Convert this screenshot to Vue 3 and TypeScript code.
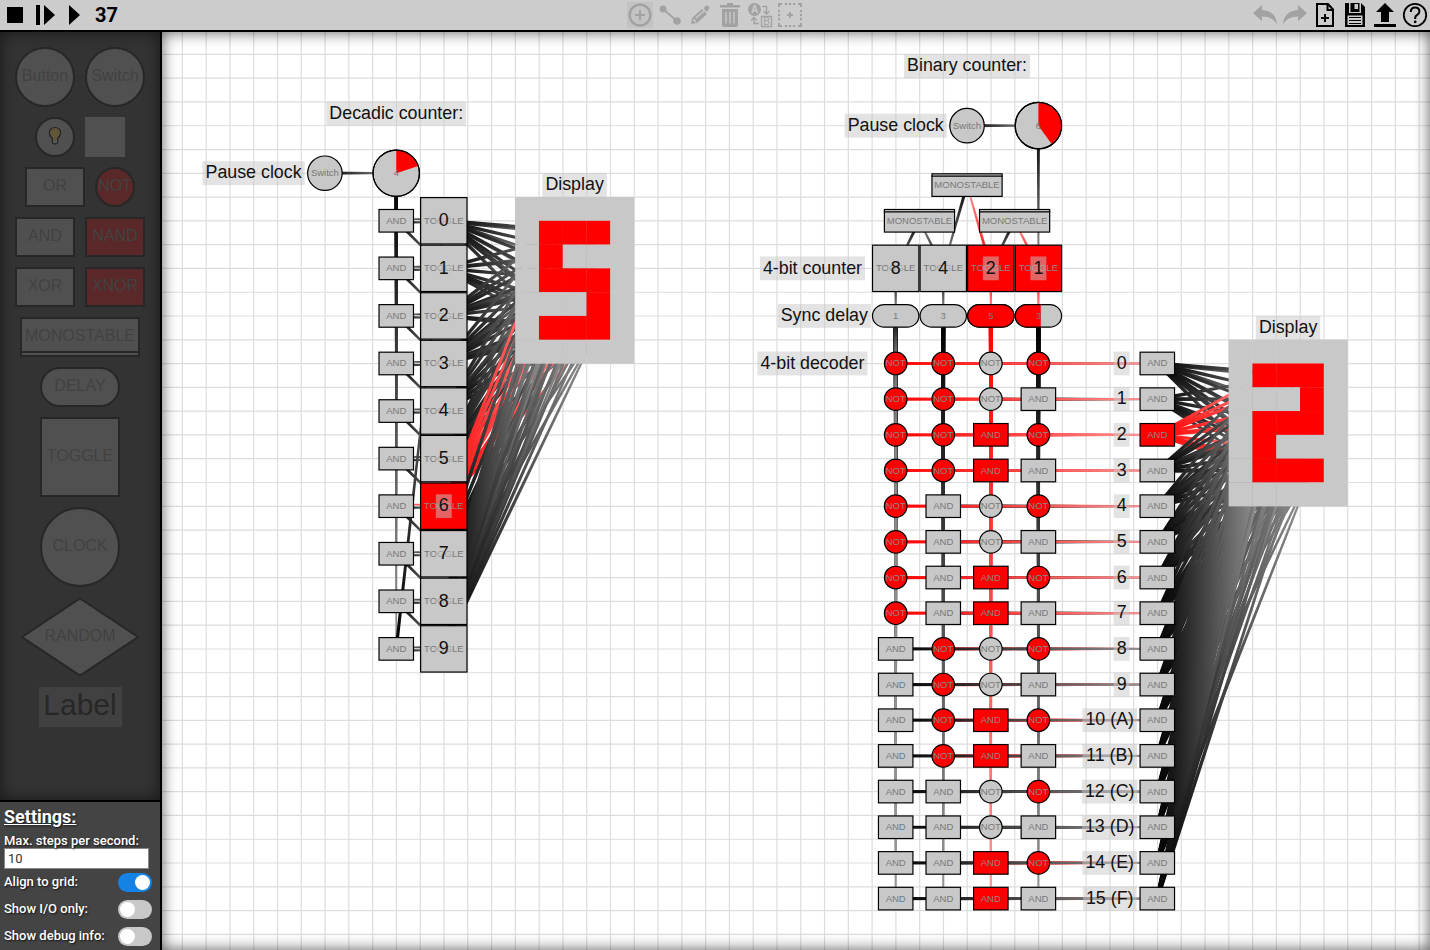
<script setup lang="ts">
import { ref } from 'vue'

type Point = [number, number]
interface Wire { a: Point; b: Point; on: boolean; shift: number; w: number }
interface Part { kind: string; x: number; y: number; w: number; h: number; text: string; on: boolean; fill?: number }
interface Label { x: number; y: number; text: string }

const STEP = 23.783
const gx = (k: number) => 182.2 + STEP * k
const gy = (k: number) => 54.3 + STEP * k

const steps = ref(37)
const maxSteps = ref('10')
const settings = ref([
  { name: 'Align to grid:', on: true },
  { name: 'Show I/O only:', on: false },
  { name: 'Show debug info:', on: false },
])

const palette = [
  [{ c: 'round big', t: 'Button' }, { c: 'round big', t: 'Switch' }],
  [{ c: 'round bulb', t: '' }, { c: 'pixel', t: '' }],
  [{ c: 'gate', t: 'OR' }, { c: 'round not neg', t: 'NOT' }],
  [{ c: 'gate', t: 'AND' }, { c: 'gate neg', t: 'NAND' }],
  [{ c: 'gate', t: 'XOR' }, { c: 'gate neg', t: 'XNOR' }],
  [{ c: 'mono', t: 'MONOSTABLE' }],
  [{ c: 'delay', t: 'DELAY' }],
  [{ c: 'toggle', t: 'TOGGLE' }],
  [{ c: 'round clock', t: 'CLOCK' }],
  [{ c: 'random', t: 'RANDOM' }],
  [{ c: 'label', t: 'Label' }],
]

const font = [
  '111101101101111', '010110010010111', '111001111100111', '111001111001111',
  '101101111001001', '111100111001111', '111100111101111', '111001001001001',
  '111101111101111', '111101111001111', '111101111101101', '110101110101110',
  '111100100100111', '110101101101110', '111100111100111', '111100111100100',
]

const wires: Wire[] = []
const parts: Part[] = []
const labels: Label[] = []
const pixels: { x: number; y: number; on: boolean }[] = []

function wire(x1: number, y1: number, x2: number, y2: number, on = false, shift = 0, w = 1) {
  wires.push({ a: [gx(x1), gy(y1)], b: [gx(x2), gy(y2)], on, shift, w })
}
function part(kind: string, x: number, y: number, w: number, h: number, text: string, on = false, fill?: number) {
  parts.push({ kind, x: gx(x), y: gy(y), w: w * STEP, h: h * STEP, text, on, fill })
}
function label(x: number, y: number, text: string) {
  labels.push({ x: gx(x), y: gy(y), text })
}
function display(left: number, top: number, digit: number) {
  for (let r = 0; r < 7; r++) {
    for (let c = 0; c < 5; c++) {
      const inside = r > 0 && r < 6 && c > 0 && c < 4
      pixels.push({ x: gx(left + c), y: gy(top + r), on: inside && font[digit][(r - 1) * 3 + c - 1] === '1' })
    }
  }
}
function connect(x: number, y: number, left: number, top: number, digit: number, on: boolean) {
  for (let i = 0; i < 15; i++) {
    if (font[digit][i] === '1') wire(x, y, left + 1.5 + (i % 3), top + 1.5 + Math.floor(i / 3), on, 0, 1.22)
  }
}

// decadic counter
wire(6, 5, 9, 5)
for (let i = 0; i < 10; i++) {
  const y = 7 + 2 * i
  wire(9, 5, 9, y)
  wire(11, y, 9, y, i === 6, 1.6, 0.75)
  wire(9, y, 11, y, false, 1.5, 0.85)
  if (i < 9) wire(9, y, 11, y + 2)
  else wire(9, y, 11, 7)
  connect(11, y, 14, 6, i, i === 6)
  part('gate', 9, y, 1.5, 1, 'AND')
  part('toggle', 11, y, 2, 2, 'TOGGLE', i === 6)
  label(11, y, String(i))
}
part('circle', 6, 5, 1.5, 1.5, 'Switch')
part('clock', 9, 5, 2, 2, '4', false, 0.2)
display(14, 6, 5)
label(9, 2.5, 'Decadic counter:')
label(3, 5, 'Pause clock')
label(16.5, 5.5, 'Display')

// binary counter
wire(33, 3, 36, 3)
wire(36, 3, 36, 9)
wire(36, 9, 35, 7, true)
wire(35, 7, 34, 9)
wire(34, 9, 33, 5.5, true)
wire(33, 5.5, 32, 9)
wire(32, 9, 31, 7)
wire(31, 7, 30, 9)
part('circle', 33, 3, 1.5, 1.5, 'Switch')
part('clock', 36, 3, 2, 2, '6', false, 0.4)
part('mono', 33, 5.5, 3, 1, 'MONOSTABLE')
part('mono', 31, 7, 3, 1, 'MONOSTABLE')
part('mono', 35, 7, 3, 1, 'MONOSTABLE')
const delays = ['1', '3', '5', '3']
for (let c = 0; c < 4; c++) {
  const x = 30 + 2 * c
  wire(x, 9, x, 11, c > 1)
  part('toggle', x, 9, 2, 2, 'TOGGLE', c > 1)
  part('delay', x, 11, 2, 1, delays[c], false, [0, 0, 1, 0.55][c])
  label(x, 9, String(8 >> c))
  for (let r = 0; r < 16; r++) {
    wire(x, 11, x, 13 + 1.5 * (c === 0 ? 15 - r : r), c === 2, 0, 1.2)
  }
}
for (let r = 0; r < 16; r++) {
  const y = 13 + 1.5 * r
  for (let c = 3; c >= 0; c--) {
    const x = 30 + 2 * c
    const bit = ((r >> (3 - c)) & 1) === 1
    const on = bit ? c === 2 : c !== 2
    wire(x, y, 41, y, on)
    part(bit ? 'gate' : 'circle', x, y, bit ? 1.5 : 1, 1, bit ? 'AND' : 'NOT', on)
  }
  connect(41, y, 44, 12, r, r === 2)
  part('gate', 41, y, 1.5, 1, 'AND', r === 2)
  if (r < 10) label(39.5, y, String(r))
  else label(39, y, `${r} (${'ABCDEF'[r - 10]})`)
}
display(44, 12, 2)
label(33, 0.5, 'Binary counter:')
label(30, 3, 'Pause clock')
label(26.5, 9, '4-bit counter')
label(27, 11, 'Sync delay')
label(26.5, 13, '4-bit decoder')
label(46.5, 11.5, 'Display')

// each wire is a sliver that narrows towards its target
function sliver(w: Wire) {
  const dx = w.b[0] - w.a[0]
  const dy = w.b[1] - w.a[1]
  const len = Math.hypot(dx, dy)
  const nx = -dy / len
  const ny = dx / len
  const h1 = 1.6 * w.w
  const h2 = 0.85 * w.w
  const ax = w.a[0] + nx * w.shift
  const ay = w.a[1] + ny * w.shift
  const bx = w.b[0] + nx * w.shift
  const by = w.b[1] + ny * w.shift
  return `${ax + nx * h1},${ay + ny * h1} ${bx + nx * h2},${by + ny * h2} ${bx - nx * h2},${by - ny * h2} ${ax - nx * h1},${ay - ny * h1}`
}

function pie(p: Part) {
  const r = p.w / 2 - 0.6
  const a = 2 * Math.PI * (p.fill ?? 0)
  return `M${p.x} ${p.y}V${p.y - r}A${r} ${r} 0 0 1 ${p.x + r * Math.sin(a)} ${p.y - r * Math.cos(a)}Z`
}

const advance: Record<string, number> = {
  i: 0.222, l: 0.222, t: 0.278, r: 0.333, c: 0.5, k: 0.5, s: 0.5, y: 0.5, ' ': 0.278, ':': 0.278,
  '-': 0.333, '(': 0.333, ')': 0.333, D: 0.722, C: 0.722, P: 0.667, S: 0.667, B: 0.667, A: 0.667, E: 0.667, F: 0.611,
}
const labelWidth = (t: string) => [...t].reduce((s, ch) => s + (advance[ch] ?? 0.556), 0) * 17.84 + 6

const columns = Array.from({ length: 53 }, (_, i) => gx(i) + 0.2)
const rows = Array.from({ length: 38 }, (_, i) => gy(i) + 0.1)
</script>

<template>
  <div class="app">
    <header>
      <div class="group">
        <svg viewBox="0 0 30 30"><path d="M7 7h16v16H7z" /></svg>
        <svg viewBox="0 0 30 30"><path d="M6 5h4v20H6zM14 5l11 10-11 10z" /></svg>
        <svg viewBox="0 0 30 30"><path d="M9 5l11 10L9 25z" /></svg>
        <span class="steps">{{ steps }}</span>
      </div>
      <div class="group tools">
        <svg viewBox="0 0 30 30" class="line"><path d="M2 2h26v26H2z" class="active" /><circle cx="15" cy="15" r="10.400" stroke-width="2.400" /><path d="M15 10v10M10 15h10" stroke-width="2" /></svg>
        <svg viewBox="0 0 30 30" class="line"><path d="M8 9l14 12" stroke-width="2" /><circle cx="8" cy="9" r="3.400" class="solid" /><circle cx="22" cy="21" r="3.800" class="solid" /></svg>
        <svg viewBox="0 0 30 30"><path d="M6 24l1-6 10-9 5 5-10 9zM18.500 8l2.500-2.200q1.300-.8 2.300.2l.5.600q1 1.500 0 2.700L21.500 12z" /><path d="M8 19l3 3M11 18l8-7" class="cut" /></svg>
        <svg viewBox="0 0 30 30"><path d="M5 5h7V3h6v2h7v2.500H5zM7 9h16v16q0 2-2 2H9q-2 0-2-2z" /><path d="M11 12v11.500M15 12v11.500M19 12v11.500" class="cut" /></svg>
        <svg viewBox="0 0 30 30" class="line"><circle cx="9.500" cy="9.500" r="6.500" class="solid" /><text x="9.500" y="13.200" class="ia">A</text><path d="M17 6.500h4.500v7M18.500 11l3 3 3-3M14 23.500H9v-5.500M6 20.500l3-3 3 3" stroke-width="1.400" /><path d="M16.500 16.500h10v10h-10z" stroke-width="1.300" /><text x="21.500" y="25.200" class="ib">B</text></svg>
        <svg viewBox="0 0 30 30" class="line"><path d="M4 7V4h3M23 4h3v3M26 23v3h-3M7 26H4v-3M10 4h2.200M14 4h2.200M18 4h2.200M10 26h2.200M14 26h2.200M18 26h2.200M4 10v2.200M4 14v2.200M4 18v2.200M26 10v2.200M26 14v2.200M26 18v2.200" stroke-width="2" /><path d="M15 12v6M12 15h6" stroke-width="2" /></svg>
      </div>
      <div class="group right">
        <svg viewBox="0 0 30 30" class="dim"><path d="M3 13.300L12 5v5q14 1 15 14.500Q23 16.500 12 16.500V21z" /></svg>
        <svg viewBox="0 0 30 30" class="dim"><path d="M27 13.300L18 5v5Q4 11 3 24.500 7 16.500 18 16.500V21z" /></svg>
        <svg viewBox="0 0 30 30" class="line"><path d="M7 4h11l5 5.500V26H7zM17.500 4v6h6" stroke-width="2" /><path d="M15 14v8M11 18h8" stroke-width="2" /></svg>
        <svg viewBox="0 0 30 30"><path d="M5 3h4v10h12V3l4 4v20H5zM10.500 3h9v9h-9z" /><path d="M7.500 15.500h15V25h-15z" class="paper" /><path d="M14.500 4h3.500v5h-3.500z" class="paper" /><path d="M9 17.500h12M9 20.500h12M9 23.500h12" class="rule" /></svg>
        <svg viewBox="0 0 30 30"><path d="M15 3l9 9h-5v10h-8V12H6zM4 24h22v3H4z" /></svg>
        <svg viewBox="0 0 30 30" class="line"><circle cx="15" cy="15" r="11.200" stroke-width="1.800" /><path d="M10.800 12q0-4.500 4.300-4.500t4.300 4q0 2-2.200 3.300T15.200 18v1" stroke-width="2" /><circle cx="15.200" cy="21.800" r=".7" stroke-width="1.400" /></svg>
      </div>
    </header>

    <div class="body">
      <aside>
        <div class="palette">
          <div v-for="(row, i) in palette" :key="i" class="row">
            <div v-for="item in row" :key="item.c + item.t" class="item" :class="item.c">
              <svg v-if="item.c === 'random'" viewBox="0 0 120 80" class="diamond"><path d="M60 1.500L118 40 60 78.500 2 40z" /></svg>
              <svg v-if="item.c === 'round bulb'" viewBox="0 0 16 20" class="bulbicon"><path d="M5.300 12.500Q2.300 9.500 2.300 6.700a5.700 5.200 0 0 1 11.400 0q0 2.800-3 5.800v3.300q0 2-1.500 2H6.800q-1.500 0-1.500-2z" /><path d="M6 14.500h4.200v2.300H6z" class="cap" /></svg>
              <span>{{ item.t }}</span>
            </div>
          </div>
        </div>
        <div class="settings">
          <h2>Settings:</h2>
          <label class="field">Max. steps per second:<input v-model="maxSteps" type="text" /></label>
          <div v-for="s in settings" :key="s.name" class="option">
            <span>{{ s.name }}</span>
            <i class="switch" :class="{ on: s.on }" @click="s.on = !s.on"></i>
          </div>
        </div>
      </aside>

      <main>
        <svg class="board" viewBox="162 32 1268 918">
          <defs>
            <linearGradient v-for="(w, i) in wires" :id="'w' + i" :key="i" gradientUnits="userSpaceOnUse" :x1="w.a[0]" :y1="w.a[1]" :x2="w.b[0]" :y2="w.b[1]">
              <stop offset="0" :stop-color="w.on ? '#f00' : '#000'" />
              <stop offset="1" :stop-color="w.on ? '#f99' : '#999'" />
            </linearGradient>
          </defs>
          <g class="grid">
            <line v-for="x in columns" :key="'c' + x" :x1="x" :x2="x" y1="32" y2="950" />
            <line v-for="y in rows" :key="'r' + y" :y1="y" :y2="y" x1="162" x2="1430" />
          </g>
          <polygon v-for="(w, i) in wires" :key="i" :points="sliver(w)" :fill="`url(#w${i})`" />
          <rect v-for="(p, i) in pixels" :key="'p' + i" :x="p.x" :y="p.y" width="24" height="24" class="px" :class="{ on: p.on }" />
          <g v-for="(p, i) in parts" :key="'e' + i" class="part" :class="{ on: p.on }">
            <circle v-if="p.kind === 'circle' || p.kind === 'clock'" :cx="p.x" :cy="p.y" :r="p.w / 2 - 0.6" />
            <rect v-else :x="p.x - p.w / 2 + 0.6" :y="p.y - p.h / 2 + 0.6" :width="p.w - 1.2" :height="p.h - 1.2" :rx="p.kind === 'delay' ? p.h / 2 : 0" />
            <path v-if="p.kind === 'clock'" :d="pie(p)" class="level" />
            <template v-if="p.kind === 'delay' && p.fill">
              <clipPath :id="'d' + i"><rect :x="p.x - p.w / 2" :y="p.y - p.h / 2" :width="p.w * p.fill" :height="p.h" /></clipPath>
              <rect :x="p.x - p.w / 2 + 0.6" :y="p.y - p.h / 2 + 0.6" :width="p.w - 1.2" :height="p.h - 1.2" :rx="p.h / 2" class="lit" :clip-path="`url(#d${i})`" />
            </template>
            <circle v-if="p.kind === 'clock'" :cx="p.x" :cy="p.y" :r="p.w / 2 - 0.6" class="ring" />
            <line v-if="p.kind === 'mono'" :x1="p.x - p.w / 2" :x2="p.x + p.w / 2" :y1="p.y - p.h / 2 + 2.900" :y2="p.y - p.h / 2 + 2.900" />
            <text :x="p.x" :y="p.y + 3">{{ p.text }}</text>
          </g>
          <g v-for="(l, i) in labels" :key="'l' + i" class="label">
            <rect :x="l.x - labelWidth(l.text) / 2" :y="l.y - 11.900" :width="labelWidth(l.text)" height="23.800" />
            <text :x="l.x" :y="l.y + 5.200">{{ l.text }}</text>
          </g>
        </svg>
      </main>
    </div>
  </div>
</template>

<style>
body {
  margin: 0;
  overflow: hidden;
}
</style>

<style scoped>
.app {
  width: 1430px;
  height: 950px;
  display: flex;
  flex-direction: column;
  font-family: Roboto, sans-serif;
  background: #fff;
}
header {
  height: 30px;
  flex: none;
  display: grid;
  grid-template-columns: 1fr auto 1fr;
  background: #ccc;
  border-bottom: 2px solid #000;
}
.group {
  display: flex;
  align-items: center;
}
.group svg {
  width: 30px;
  height: 30px;
  fill: #000;
  color: #000;
}
.group.tools svg,
.group svg.dim {
  fill: #a2a2a2;
  color: #a2a2a2;
}
.right {
  justify-content: flex-end;
}
.group svg.line {
  fill: none;
  stroke: currentColor;
}
.line .active {
  fill: #c3c3c3;
  stroke: none;
}
.line .solid {
  fill: currentColor;
  stroke: none;
}
.cut {
  fill: none;
  stroke: #ccc;
  stroke-width: 1.3;
}
.paper {
  fill: #ccc;
}
.rule {
  stroke: #000;
  stroke-width: 1;
}
.ia,
.ib {
  font: bold 10px "Liberation Sans", sans-serif;
  text-anchor: middle;
  stroke: none;
  fill: #ccc;
}
.ib {
  font-weight: normal;
  fill: #a2a2a2;
}
.steps {
  font-size: 20px;
  font-weight: 700;
  margin-left: 5px;
}
.body {
  flex: 1;
  display: flex;
  min-height: 0;
}
aside {
  width: 160px;
  flex: none;
  border-right: 2px solid #000;
  display: flex;
  flex-direction: column;
}
.palette {
  flex: 1;
  padding-top: 15px;
  box-sizing: border-box;
  display: flex;
  flex-direction: column;
  gap: 10px;
  background: #333;
  box-shadow: inset 0 0 15px rgba(0, 0, 0, 0.6);
  font: 16px "Liberation Sans", Arial, sans-serif;
  color: #424242;
}
.row {
  display: flex;
  justify-content: center;
  gap: 10px;
}
.item {
  box-sizing: border-box;
  height: 40px;
  width: 60px;
  border: 2px solid #272727;
  background: #505050;
  display: flex;
  align-items: center;
  justify-content: center;
}
.item span {
  margin-top: -3px;
}
.round {
  border-radius: 50%;
}
.big {
  height: 60px;
}
.bulb,
.not {
  width: 40px;
}
.pixel {
  width: 40px;
  border: 0;
}
.neg {
  background: #5a2828;
}
.mono {
  width: 120px;
  background: linear-gradient(#505050 32px, #272727 32px, #272727 34px, #505050 34px);
}
.delay {
  width: 80px;
  border-radius: 20px;
}
.toggle,
.clock {
  width: 80px;
  height: 80px;
}
.random {
  width: 120px;
  height: 80px;
  border: 0;
  background: none;
  display: grid;
  place-items: center;
}
.random > * {
  grid-area: 1 / 1;
}
.diamond {
  width: 120px;
  height: 80px;
}
.diamond path {
  fill: #505050;
  stroke: #272727;
  stroke-width: 2;
}
.bulbicon {
  width: 16px;
  height: 20px;
  flex: none;
  margin-top: -3px;
}
.bulbicon path {
  fill: #615539;
  stroke: #242424;
  stroke-width: 1.2;
}
.bulbicon .cap {
  fill: #55585a;
  stroke: none;
}
.label.item {
  width: 83px;
  border: 0;
  background: #414141;
  color: #272727;
  font-size: 30px;
}
.label.item span {
  margin-top: -5px;
}
.settings {
  height: 148px;
  box-sizing: border-box;
  flex: none;
  border-top: 2px solid #000;
  margin-bottom: 2px;
  padding: 4px 8px 4px 4px;
  background: #444;
  color: #fff;
  font-size: 13px;
  font-weight: 500;
  text-shadow: 1px 1px 2px #111;
  box-shadow: 0 2px #444;
}
h2 {
  margin: 0;
  font-size: 18px;
  line-height: 22px;
  font-weight: 700;
  text-decoration: underline;
}
.field {
  display: block;
  line-height: 15px;
  margin-top: 5px;
}
.field input {
  display: block;
  box-sizing: border-box;
  width: 145px;
  height: 21px;
  margin-top: 0;
  padding: 0 3px;
  border: 1px solid #888;
  background: #fff;
  font: 13px Roboto, sans-serif;
  color: #333;
}
.option {
  display: flex;
  align-items: center;
  justify-content: space-between;
  height: 19px;
  margin-top: 4px;
  margin-bottom: 8px;
}
.option span {
  margin-top: -2px;
}
.switch {
  width: 34px;
  height: 19px;
  box-sizing: border-box;
  padding: 2px;
  border-radius: 10px;
  background: #c8c8c8;
  display: flex;
}
.switch::after {
  content: "";
  width: 15px;
  height: 15px;
  border-radius: 50%;
  background: #fff;
}
.switch.on {
  background: #1583e6;
  justify-content: flex-end;
}
main {
  flex: 1;
  position: relative;
  background: #fff;
}
main::after {
  content: "";
  position: absolute;
  inset: 0;
  box-shadow: inset 0 0 15px rgba(0, 0, 0, 0.65);
}
.board {
  display: block;
  width: 1268px;
  height: 918px;
  font-family: "Liberation Sans", Arial, sans-serif;
}
.grid line {
  stroke: #ddd;
  stroke-width: 1.2;
}
.px {
  fill: #c8c8c8;
}
.px.on {
  fill: #f00;
}
.part rect,
.part circle,
.part line {
  fill: #c8c8c8;
  stroke: #000;
  stroke-width: 1.19;
}
.part.on rect,
.part.on circle,
.part rect.lit {
  fill: #f00;
}
.part .level {
  fill: #f00;
}
.part circle.ring {
  fill: none;
}
.part text {
  font-size: 9.52px;
  text-anchor: middle;
  fill: #787878;
}
.part.on text {
  fill: #888;
}
.label rect {
  fill: #c8c8c8;
  fill-opacity: 0.5;
}
.label text {
  font-size: 17.84px;
  text-anchor: middle;
  fill: #111;
}
</style>
